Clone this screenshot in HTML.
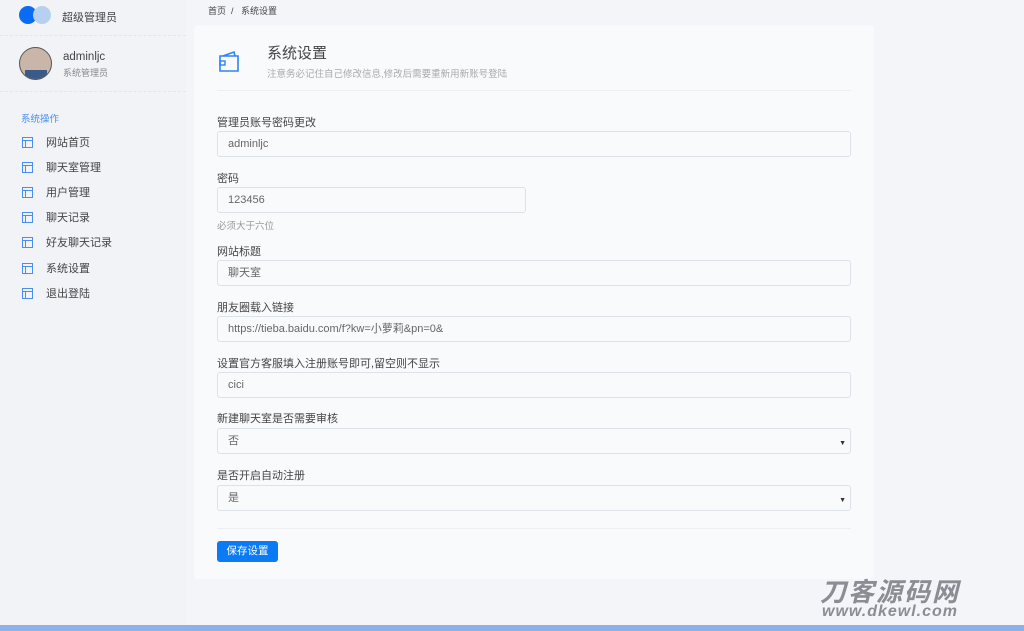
<!DOCTYPE html><html><head><meta charset="utf-8"><style>
*{margin:0;padding:0;box-sizing:border-box}
body{width:1024px;height:631px;overflow:hidden;background:#f3f5f9;font-family:"Liberation Sans","Noto Sans CJK SC",sans-serif;position:relative;color:#555}
.side{position:absolute;left:0;top:0;width:186px;height:631px;background:#f1f3f7}
.abs{position:absolute}
.card{position:absolute;left:194px;top:25px;width:680px;height:554px;background:#f9fafc;border-radius:4px}
.lbl{position:absolute;left:217px;font-size:11px;color:#444}
.inp{position:absolute;left:217px;width:634px;height:26px;border:1px solid #dde1ea;border-radius:3px;background:#f9fafc;font-size:11px;color:#666;padding:6px 10px;line-height:13px}
.nav{position:absolute;left:22px;font-size:11px;color:#444;display:flex;align-items:center}
.nav i{display:inline-block;width:11px;height:11px;border:1.5px solid #4a8ff0;margin-right:13px;position:relative}
.nav i:before{content:"";position:absolute;left:0;right:0;top:2px;border-top:1.5px solid #4a8ff0}
.nav i:after{content:"";position:absolute;left:2px;top:3px;bottom:0;border-left:1.5px solid #4a8ff0}
.arr{position:absolute;right:4px;top:8px;font-size:7px;color:#333}
</style></head><body>
<div class="side">
<div class="abs" style="left:19px;top:6px;width:18px;height:18px;border-radius:50%;background:#0a6cf5"></div>
<div class="abs" style="left:33px;top:6px;width:18px;height:18px;border-radius:50%;background:#b8d0f0"></div>
<div class="abs" style="left:62px;top:9px;font-size:11px;color:#444">超级管理员</div>
<div class="abs" style="left:0;top:35px;width:186px;border-top:1px dashed #e2e5ea"></div>
<div class="abs" style="left:19px;top:47px;width:33px;height:33px;border-radius:50%;border:1.5px solid #555;background:#c9b6a8;overflow:hidden"><div style="position:absolute;left:5px;bottom:0;width:22px;height:9px;background:#3a5a8a"></div></div>
<div class="abs" style="left:63px;top:51px;font-size:11.5px;color:#444">adminljc</div>
<div class="abs" style="left:63px;top:66px;font-size:9px;color:#888">系统管理员</div>
<div class="abs" style="left:0;top:91px;width:186px;border-top:1px dashed #e2e5ea"></div>
<div class="abs" style="left:21px;top:111px;font-size:9.5px;color:#4a8ff0">系统操作</div>
<div class="nav" style="top:134px"><i></i>网站首页</div>
<div class="nav" style="top:159px"><i></i>聊天室管理</div>
<div class="nav" style="top:184px"><i></i>用户管理</div>
<div class="nav" style="top:209px"><i></i>聊天记录</div>
<div class="nav" style="top:234px"><i></i>好友聊天记录</div>
<div class="nav" style="top:260px"><i></i>系统设置</div>
<div class="nav" style="top:285px"><i></i>退出登陆</div>
</div>
<div class="abs" style="left:208px;top:4px;font-size:9px;color:#444">首页 &nbsp;/ &nbsp;&nbsp;系统设置</div>
<div class="card"></div>
<svg class="abs" style="left:217px;top:49px" width="24" height="24" viewBox="0 0 24 24"><path d="M3 7h18v15H3z M6 7l11-4 1 4" fill="none" stroke="#2f84f0" stroke-width="1.6"/><rect x="3" y="12" width="5" height="4" fill="none" stroke="#2f84f0" stroke-width="1.4"/></svg>
<div class="abs" style="left:267px;top:42px;font-size:15px;color:#444">系统设置</div>
<div class="abs" style="left:267px;top:66px;font-size:9.5px;color:#aaa">注意务必记住自己修改信息,修改后需要重新用新账号登陆</div>
<div class="abs" style="left:217px;top:90px;width:634px;border-top:1px solid #eceef2"></div>
<div class="lbl" style="top:114px">管理员账号密码更改</div>
<div class="inp" style="top:131px">adminljc</div>
<div class="lbl" style="top:170px">密码</div>
<div class="inp" style="top:187px;width:309px">123456</div>
<div class="lbl" style="top:218px;font-size:9.5px;color:#999">必须大于六位</div>
<div class="lbl" style="top:243px">网站标题</div>
<div class="inp" style="top:260px">聊天室</div>
<div class="lbl" style="top:299px">朋友圈载入链接</div>
<div class="inp" style="top:316px">https://tieba.baidu.com/f?kw=小萝莉&amp;pn=0&amp;</div>
<div class="lbl" style="top:355px">设置官方客服填入注册账号即可,留空则不显示</div>
<div class="inp" style="top:372px">cici</div>
<div class="lbl" style="top:410px">新建聊天室是否需要审核</div>
<div class="inp" style="top:428px">否<span class="arr">▼</span></div>
<div class="lbl" style="top:467px">是否开启自动注册</div>
<div class="inp" style="top:485px">是<span class="arr">▼</span></div>
<div class="abs" style="left:217px;top:528px;width:634px;border-top:1px solid #eceef2"></div>
<div class="abs" style="left:217px;top:541px;width:61px;height:21px;background:#0a7af5;border-radius:3px;color:#fff;font-size:10.5px;text-align:center;line-height:21px">保存设置</div>
<div class="abs" style="left:820px;top:572px;font-size:26px;font-style:italic;font-weight:bold;color:#8a8d93;letter-spacing:2px">刀客源码网</div>
<div class="abs" style="left:822px;top:603px;font-size:16px;font-style:italic;font-weight:bold;color:#8a8d93;letter-spacing:1px">www.dkewl.com</div>
<div class="abs" style="left:0;top:625px;width:1024px;height:6px;background:#8fb0e8"></div>
</body></html>
